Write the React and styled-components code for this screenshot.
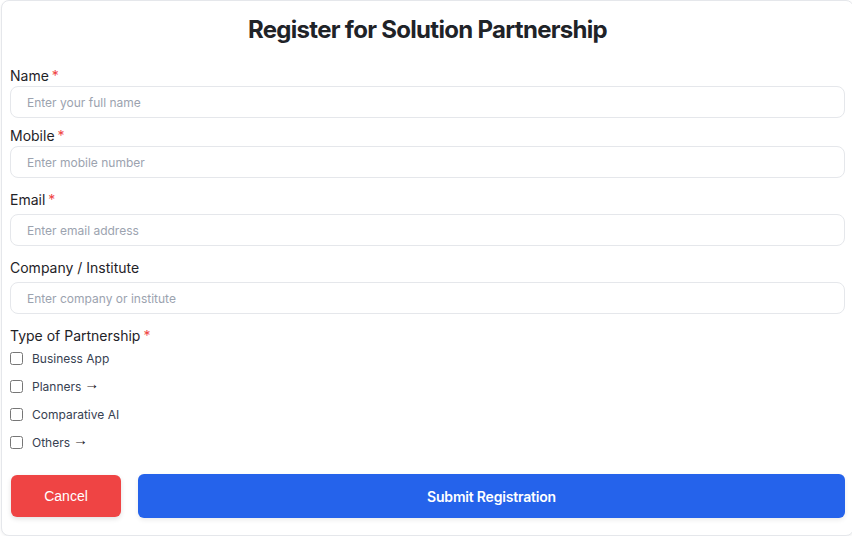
import React from "react";
import styled, { createGlobalStyle } from "styled-components";

const Global = createGlobalStyle`
  html, body { margin: 0; padding: 0; overflow: hidden; background: #ffffff; }
  body { font-family: Inter, "Noto Sans", sans-serif; }
  * { box-sizing: border-box; }
`;

const Card = styled.form`
  margin-left: 1px;
  width: 853px;
  height: 536px;
  border: 1px solid #e5e7eb;
  border-radius: 8px;
  background: #fff;
  box-shadow: 0 1px 3px rgba(0, 0, 0, 0.06);
  padding: 13px 8px 16px;
  display: flex;
  flex-direction: column;
`;

const Title = styled.h2`
  margin: 0 0 20px;
  font-size: 24px;
  line-height: 32px;
  font-weight: 700;
  color: #1f2328;
  text-align: center;
  letter-spacing: -0.7px;
`;

const Field = styled.div`
  display: flex;
  flex-direction: column;
  gap: ${(p) => p.$labelGap}px;
  margin-bottom: ${(p) => p.$after}px;
`;

const Label = styled.label`
  font-size: 14px;
  line-height: 20px;
  font-weight: 400;
  color: #1f2328;
`;

const Req = styled.span`
  color: #ef4444;
  margin-left: 3px;
`;

const Input = styled.input`
  width: 100%;
  height: 32px;
  border: 1px solid #e5e7eb;
  border-radius: 8px;
  padding: 0 16px;
  font-family: inherit;
  font-size: 12px;
  color: #111827;
  outline: none;
  &::placeholder { color: #9ca3af; }
`;

const Options = styled.div`
  display: flex;
  flex-direction: column;
  gap: 8px;
  margin-top: 2px;
`;

const Option = styled.label`
  display: flex;
  align-items: center;
  height: 20px;
  font-size: 12px;
  color: #374151;
`;

const Arrow = styled.span`
  font-family: "Liberation Sans", Arial, sans-serif;
  font-size: 15px;
  line-height: 15px;
  padding-bottom: 5px;
  margin-left: 3px;
  color: #1f2328;
`;

const Box = styled.input`
  width: 13px;
  height: 13px;
  margin: 0 9px 0 0;
`;

const Actions = styled.div`
  display: flex;
  align-items: center;
  gap: 17px;
  margin-top: 22px;
`;

const CancelButton = styled.button`
  margin-left: 1px;
  width: 110px;
  height: 42px;
  border: none;
  border-radius: 6px;
  background: #ef4444;
  color: #fff;
  font-family: "Liberation Sans", Arial, sans-serif;
  font-size: 14px;
  font-weight: 500;
  box-shadow: 0 2px 5px rgba(0, 0, 0, 0.12);
  cursor: pointer;
`;

const SubmitButton = styled.button`
  flex: 1;
  height: 44px;
  border: none;
  border-radius: 6px;
  background: #2563eb;
  color: #fff;
  font-family: Inter, sans-serif;
  font-size: 14px;
  font-weight: 600;
  letter-spacing: -0.2px;
  box-shadow: 0 2px 5px rgba(0, 0, 0, 0.08);
  cursor: pointer;
`;

const fields = [
  { label: "Name", req: true, ph: "Enter your full name", gap: 0, after: 8 },
  { label: "Mobile", req: true, ph: "Enter mobile number", gap: 0, after: 12 },
  { label: "Email", req: true, ph: "Enter email address", gap: 4, after: 12 },
  { label: "Company / Institute", req: false, ph: "Enter company or institute", gap: 4, after: 12 },
];

const options = [
  { text: "Business App" },
  { text: "Planners", arrow: true },
  { text: "Comparative AI" },
  { text: "Others", arrow: true },
];

export default function App() {
  return (
    <>
      <Global />
      <Card onSubmit={(e) => e.preventDefault()}>
        <Title>Register for Solution Partnership</Title>
        {fields.map((f) => (
          <Field key={f.label} $labelGap={f.gap} $after={f.after}>
            <Label>
              {f.label}
              {f.req && <Req>*</Req>}
            </Label>
            <Input placeholder={f.ph} />
          </Field>
        ))}
        <Field $labelGap={0} $after={0}>
          <Label>
            Type of Partnership<Req>*</Req>
          </Label>
          <Options>
            {options.map((o) => (
              <Option key={o.text}>
                <Box type="checkbox" />
                {o.text}
                {o.arrow && <Arrow>{"\u2192"}</Arrow>}
              </Option>
            ))}
          </Options>
        </Field>
        <Actions>
          <CancelButton type="button">Cancel</CancelButton>
          <SubmitButton type="submit">Submit Registration</SubmitButton>
        </Actions>
      </Card>
    </>
  );
}
